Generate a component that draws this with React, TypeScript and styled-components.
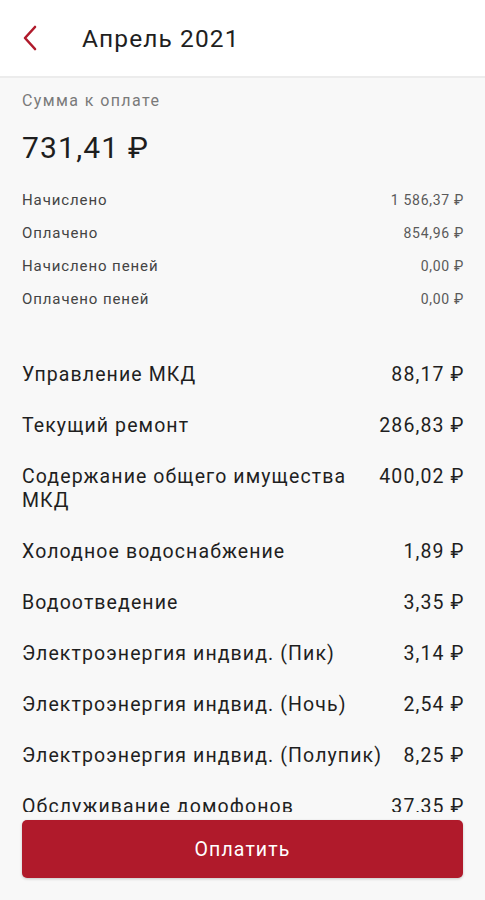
import React from "react";
import styled, { createGlobalStyle } from "styled-components";

const Global = createGlobalStyle`
  html, body { margin: 0; padding: 0; }
  body {
    font-family: Roboto, "Noto Sans", "Liberation Sans", sans-serif;
    background: #f8f8f8;
    color: #222;
  }
`;

const Screen = styled.div`
  width: 485px;
  height: 900px;
  display: flex;
  flex-direction: column;
  background: #f8f8f8;
  overflow: hidden;
`;

const Header = styled.header`
  height: 76px;
  flex: none;
  display: flex;
  align-items: center;
  background: #fff;
  border-bottom: 2px solid #ececec;
  padding: 0 18px;
  box-sizing: content-box;
`;

const BackButton = styled.button`
  width: 24px;
  height: 32px;
  padding: 0;
  border: none;
  background: none;
  display: flex;
  align-items: center;
  justify-content: center;
  margin-right: 40px;
`;

const Title = styled.h1`
  margin: 0;
  font-size: 24.5px;
  font-weight: 400;
  color: #1f1f1f;
  letter-spacing: 1.1px;
`;

const Scroll = styled.main`
  flex: 1;
  overflow: hidden;
  padding: 0 22px;
`;

const Caption = styled.div`
  margin-top: 12px;
  font-size: 16px;
  line-height: 22px;
  color: #7a7a7a;
  letter-spacing: 1.4px;
`;

const Total = styled.div`
  margin-top: 18px;
  font-size: 30px;
  line-height: 36px;
  color: #1e1e1e;
  letter-spacing: 1.2px;
`;

const Summary = styled.div`
  margin-top: 24px;
  display: flex;
  flex-direction: column;
  gap: 13px;
`;

const SmallRow = styled.div`
  display: flex;
  justify-content: space-between;
  font-size: 15px;
  line-height: 20px;
  color: #444;
  letter-spacing: 0.9px;
`;

const SmallValue = styled.span`
  font-size: 14px;
  color: #5a5a5a;
  letter-spacing: 0.7px;
  margin-right: -1px;
`;

const Items = styled.div`
  margin-top: 54px;
  display: flex;
  flex-direction: column;
  gap: 27px;
`;

const ItemRow = styled.div`
  display: flex;
  justify-content: space-between;
  align-items: flex-start;
  gap: 16px;
  font-size: 19.5px;
  line-height: 24px;
  color: #1f1f1f;
  letter-spacing: 1.1px;
`;

const ItemName = styled.span`
  flex: 1;
`;

const ItemValue = styled.span`
  white-space: nowrap;
  margin-right: -1.5px;
`;

const Footer = styled.footer`
  flex: none;
  height: 88px;
  padding: 8px 22px 0;
  background: #f8f8f8;
  box-sizing: border-box;
`;

const PayButton = styled.button`
  width: 100%;
  height: 58px;
  border: none;
  border-radius: 5px;
  background: #b01a2b;
  color: #fff;
  font-family: inherit;
  font-size: 19.5px;
  letter-spacing: 1.1px;
  box-shadow: 0 1px 3px rgba(0, 0, 0, 0.2);
`;

const summary = [
  ["Начислено", "1 586,37 ₽"],
  ["Оплачено", "854,96 ₽"],
  ["Начислено пеней", "0,00 ₽"],
  ["Оплачено пеней", "0,00 ₽"],
];

const items = [
  ["Управление МКД", "88,17 ₽"],
  ["Текущий ремонт", "286,83 ₽"],
  ["Содержание общего имущества МКД", "400,02 ₽"],
  ["Холодное водоснабжение", "1,89 ₽"],
  ["Водоотведение", "3,35 ₽"],
  ["Электроэнергия индвид. (Пик)", "3,14 ₽"],
  ["Электроэнергия индвид. (Ночь)", "2,54 ₽"],
  ["Электроэнергия индвид. (Полупик)", "8,25 ₽"],
  ["Обслуживание домофонов", "37,35 ₽"],
  ["Вывоз мусора", "12,40 ₽"],
];

export default function App() {
  return (
    <Screen>
      <Global />
      <Header>
        <BackButton aria-label="Назад">
          <svg width="16" height="26" viewBox="0 0 16 26">
            <path d="M13 2 L3 13 L13 24" fill="none" stroke="#b01a2b" strokeWidth="2.6" strokeLinecap="round" strokeLinejoin="round" />
          </svg>
        </BackButton>
        <Title>Апрель 2021</Title>
      </Header>
      <Scroll>
        <Caption>Сумма к оплате</Caption>
        <Total>731,41 ₽</Total>
        <Summary>
          {summary.map(([n, v]) => (
            <SmallRow key={n}>
              <span>{n}</span>
              <SmallValue>{v}</SmallValue>
            </SmallRow>
          ))}
        </Summary>
        <Items>
          {items.map(([n, v]) => (
            <ItemRow key={n}>
              <ItemName>{n}</ItemName>
              <ItemValue>{v}</ItemValue>
            </ItemRow>
          ))}
        </Items>
      </Scroll>
      <Footer>
        <PayButton>Оплатить</PayButton>
      </Footer>
    </Screen>
  );
}
